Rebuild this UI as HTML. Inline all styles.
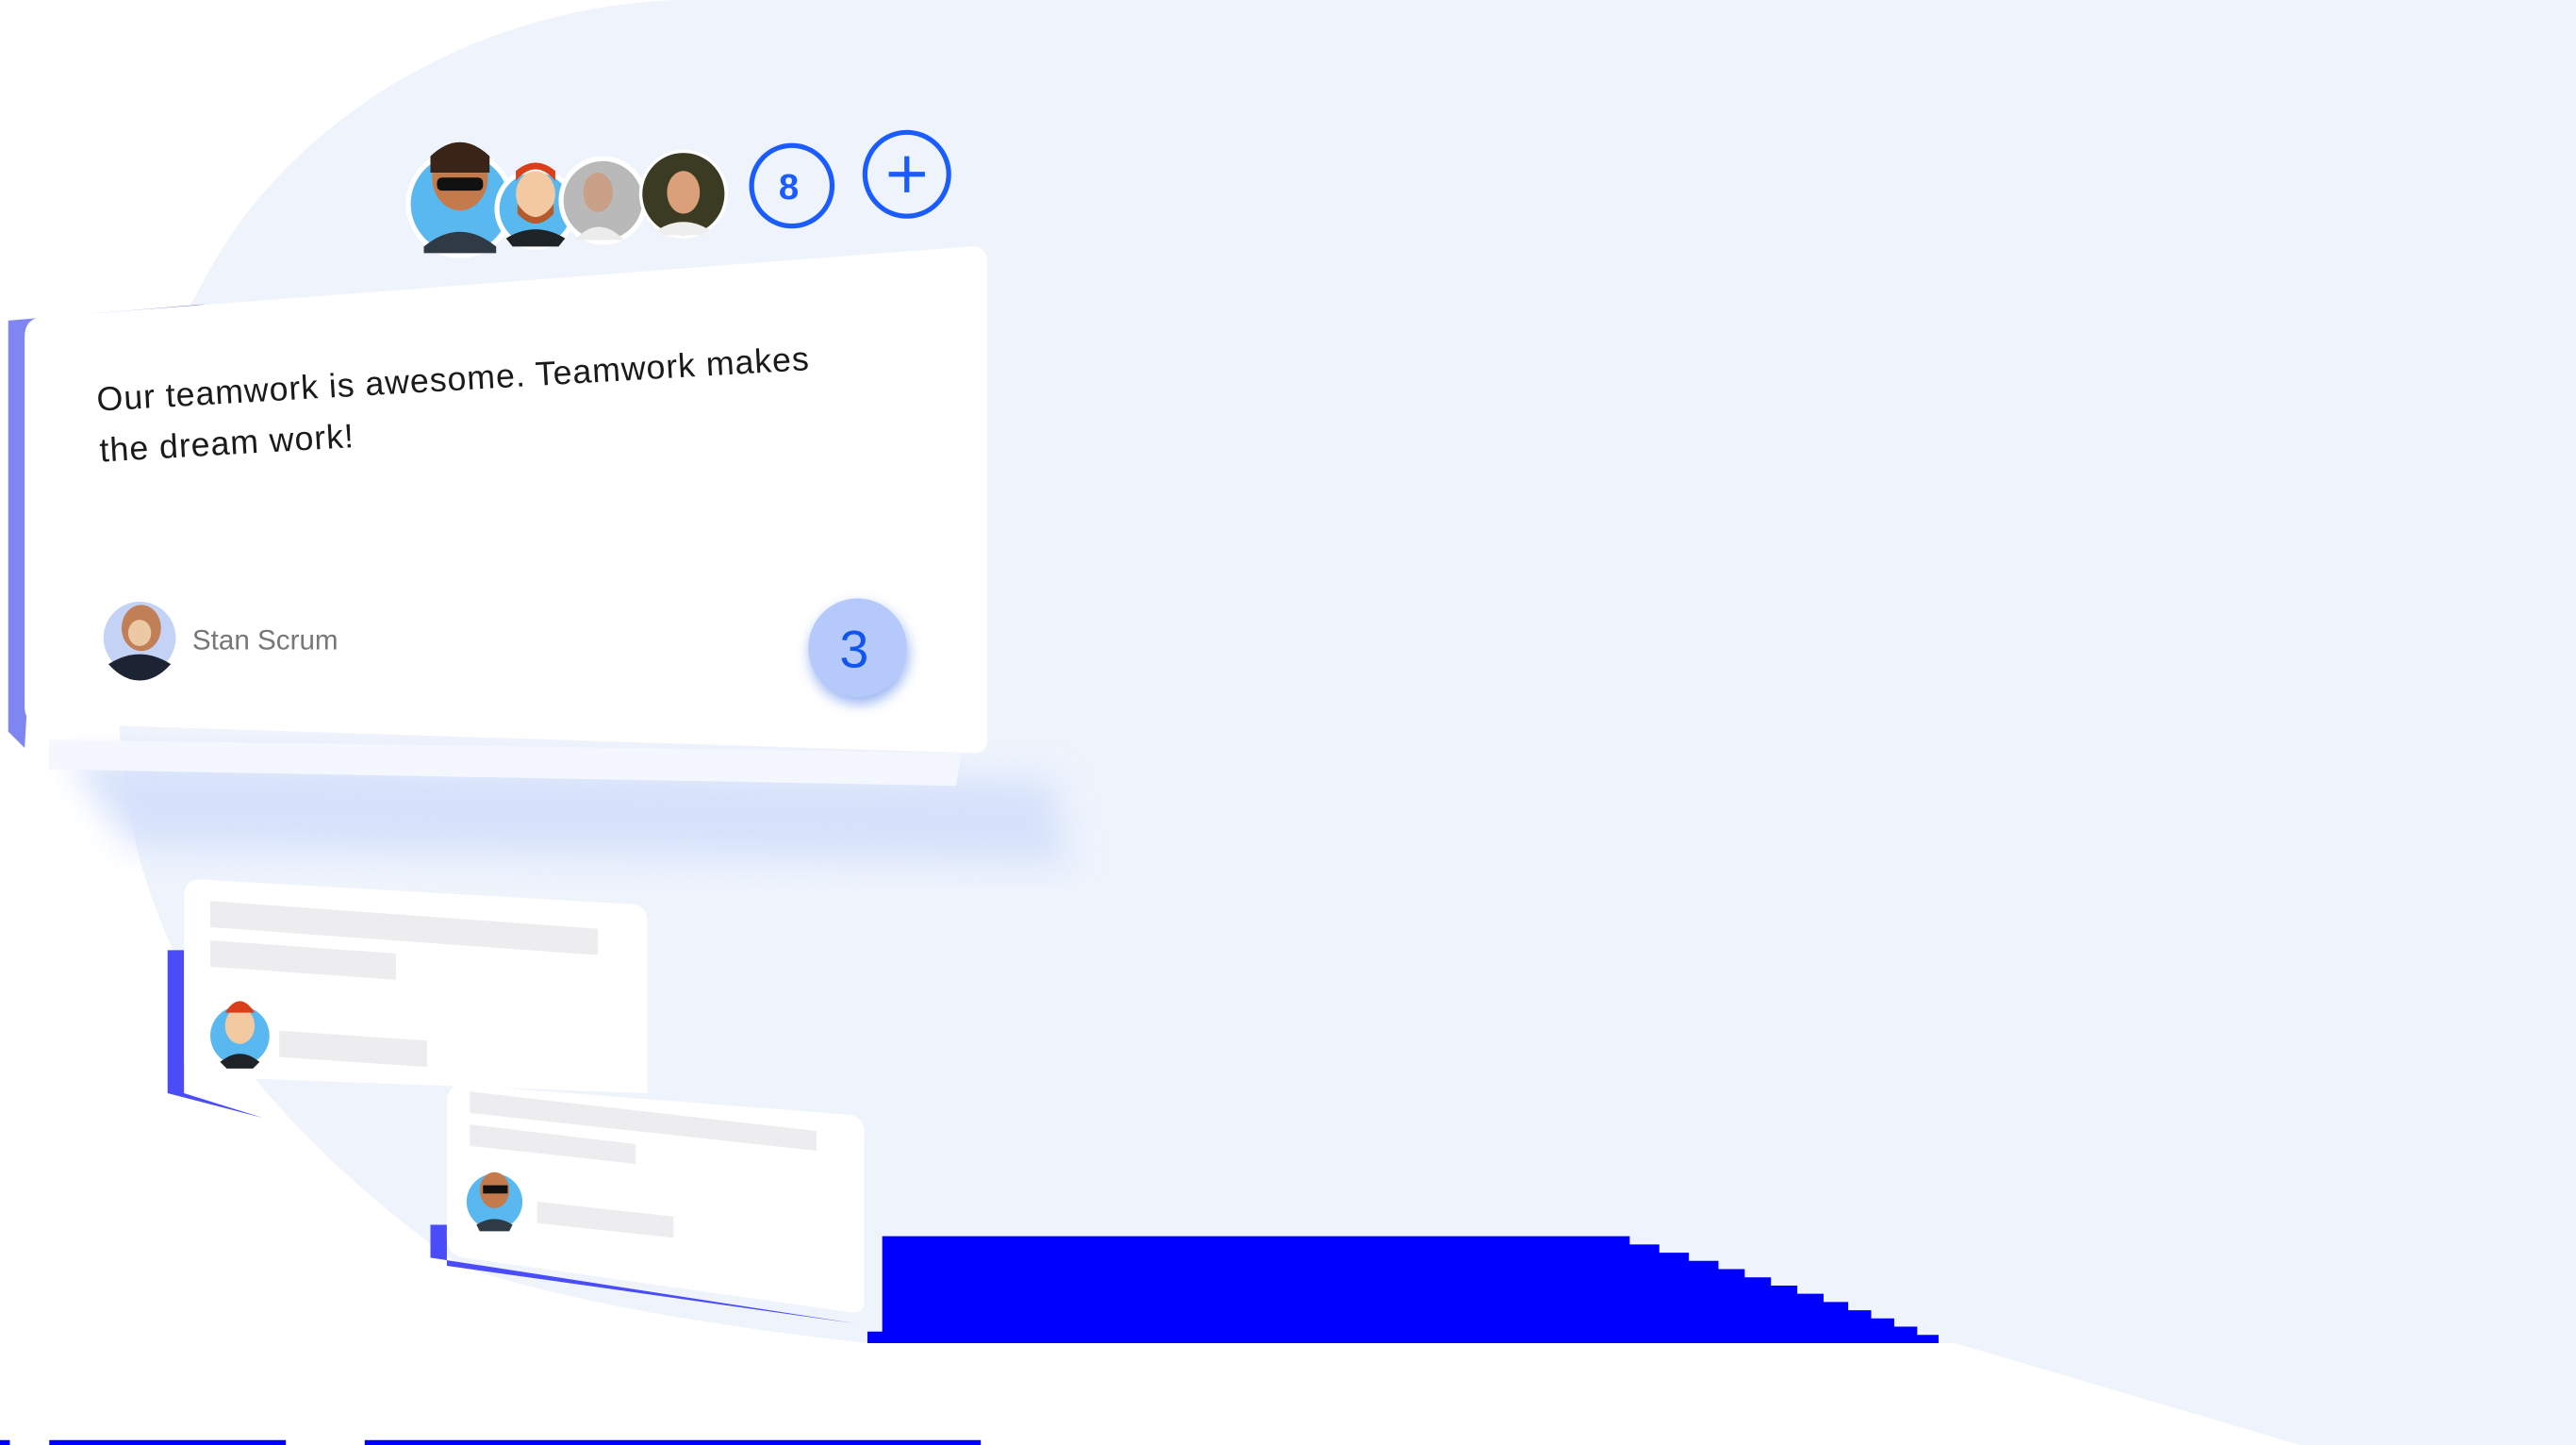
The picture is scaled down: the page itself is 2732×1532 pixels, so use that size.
<!DOCTYPE html>
<html><head><meta charset="utf-8"><style>
html,body{margin:0;padding:0;background:#fff;overflow:hidden;}
#w{position:absolute;left:0;top:0;width:1568px;height:879px;transform-origin:0 0;transform:scale(1.74235,1.7429);font-family:"Liberation Sans",sans-serif;}
.a{position:absolute;}
</style></head><body><div id="w">
<svg class="a" style="left:0;top:0" width="1568" height="879" viewBox="0 0 1568 879">
<defs>
<filter id="bl" x="-20%" y="-20%" width="140%" height="140%"><feGaussianBlur stdDeviation="10"/></filter>
<filter id="sh" x="-20%" y="-20%" width="140%" height="140%"><feGaussianBlur stdDeviation="4"/></filter>
</defs>
<path d="M150,130 C220,40 330,0 420,0 L1568,0 L1568,879 L1400,879 L1190,817 L528,817 C420,805 340,790 280,770 C170,690 90,600 75,470 C60,330 90,210 150,130 Z" fill="#eef3fc"/>
<polygon points="40,460 640,475 650,525 80,515" fill="#d6e2fb" filter="url(#bl)"/>
<polygon points="5,195 125,185 30,200 15,455 5,445" fill="#7f86f2"/>
<polygon points="30,450 585,458 582,478 30,468" fill="#f4f7fe"/>
<path d="M25,193 L590,150 Q601,149 601,160 L601,450 Q601,459 590,458 L25,440 Q15,440 15,430 L15,205 Q15,194 25,193 Z" fill="#fff"/>
<polygon points="102,578 112,578 112,665 160,680 102,665" fill="#4a4cf8"/>
<path d="M122,535 L385,550 Q394,551 394,560 L394,665 L122,655 Q112,655 112,645 L112,545 Q112,535 122,535 Z" fill="#fff"/>
<polygon points="128,548 364,565 364,581 128,564" fill="#ededf0"/>
<polygon points="128,572 241,580 241,596 128,588" fill="#ededf0"/>
<polygon points="170,627 260,633 260,649 170,643" fill="#ededf0"/>
<polygon points="262,745 272,745 272,770 520,805 262,765" fill="#4a4cf8"/>
<path d="M282,660 L516,678 Q526,679 526,689 L526,792 Q526,800 516,798 L282,765 Q272,763 272,753 L272,670 Q272,660 282,660 Z" fill="#fff"/>
<polygon points="286,664 497,688 497,700 286,677" fill="#ededf0"/>
<polygon points="286,684 387,696 387,708 286,697" fill="#ededf0"/>
<polygon points="327,731 410,740 410,753 327,744" fill="#ededf0"/>
<path d="M537,752 H992 V757 H1010 V762 H1028 V767 H1046 V772 H1062 V777 H1078 V782 H1094 V787 H1110 V792 H1125 V797 H1139 V802 H1153 V807 H1167 V812 H1180 V817 H528 V810 H537 Z" fill="#0000ff"/>
<rect x="0" y="876" width="6" height="3" fill="#0000ff"/>
<rect x="30" y="876" width="144" height="3" fill="#0000ff"/>
<rect x="222" y="876" width="375" height="3" fill="#0000ff"/>
<circle cx="280" cy="124" r="33" fill="#fff"/>
<circle cx="280" cy="124" r="30" fill="#5ab8f0"/>
<ellipse cx="280" cy="108" rx="17" ry="20" fill="#c47a4a"/>
<path d="M262,95 Q280,78 298,95 L298,105 L262,105 Z" fill="#3a2418"/>
<rect x="266" y="108" width="28" height="8" rx="3" fill="#111"/>
<path d="M258,150 Q280,132 302,150 L302,154 L258,154 Z" fill="#2f3a45"/>
<circle cx="326" cy="127" r="25" fill="#fff"/>
<circle cx="326" cy="127" r="22" fill="#5ab8f0"/>
<ellipse cx="326" cy="118" rx="12" ry="14" fill="#f2c9a0"/>
<path d="M314,110 Q326,96 338,110 L338,104 Q326,94 314,104 Z" fill="#d9401a"/>
<path d="M315,124 Q326,140 337,124 L337,130 Q326,142 315,130 Z" fill="#b55a2a"/>
<path d="M308,145 Q326,134 344,145 L340,150 L312,150 Z" fill="#1e2328"/>
<circle cx="367" cy="122" r="27" fill="#fff"/>
<circle cx="367" cy="122" r="24" fill="#b9b9b9"/>
<ellipse cx="364" cy="117" rx="9" ry="12" fill="#c8a088"/>
<path d="M350,146 Q364,130 380,146 Z" fill="#ececec"/>
<circle cx="416" cy="118" r="27" fill="#fff"/>
<circle cx="416" cy="118" r="25" fill="#3b3a22"/>
<ellipse cx="416" cy="117" rx="10" ry="13" fill="#d9a07a"/>
<path d="M400,140 Q416,130 432,140 L428,143 L404,143 Z" fill="#eee"/>
<circle cx="482" cy="113" r="24.5" fill="none" stroke="#1a5cff" stroke-width="3"/>
<circle cx="552" cy="106" r="25.5" fill="none" stroke="#1a5cff" stroke-width="3"/>
<path d="M541,106 H563 M552,95 V117" stroke="#1a5cff" stroke-width="3"/>
<circle cx="85" cy="388" r="22" fill="#c4d3f5"/>
<ellipse cx="86" cy="382" rx="12" ry="14" fill="#c07f55"/>
<ellipse cx="85" cy="385" rx="7" ry="8" fill="#ecc9a5"/>
<path d="M66,404 Q85,392 104,404 Q95,414 85,414 Q75,414 66,404 Z" fill="#1c2433"/>
<circle cx="523" cy="398" r="30" fill="#97b3f3" filter="url(#sh)"/>
<circle cx="522" cy="394" r="30" fill="#b5cafb"/>
<circle cx="146" cy="630" r="18" fill="#5ab8f0"/>
<ellipse cx="146" cy="624" rx="9" ry="11" fill="#f2c9a0"/>
<path d="M137,616 Q146,602 155,616 Z" fill="#d9401a"/>
<path d="M134,646 Q146,636 158,646 L154,650 L138,650 Z" fill="#1e2328"/>
<circle cx="301" cy="731" r="17" fill="#5ab8f0"/>
<ellipse cx="301" cy="724" rx="9" ry="11" fill="#c47a4a"/>
<rect x="294" y="721" width="15" height="5" fill="#111"/>
<path d="M290,745 Q301,738 312,745 L310,749 L292,749 Z" fill="#2f3a45"/>
</svg>
<div class="a" style="left:58px;top:228px;width:540px;transform:rotate(-3.3deg);transform-origin:0 0;font-size:20.5px;letter-spacing:0.55px;line-height:31px;color:#1a1a1a;white-space:nowrap;">Our teamwork is awesome. Teamwork makes<br>the dream work!</div>
<div class="a" style="left:117px;top:380px;font-size:17px;color:#777;">Stan Scrum</div>
<div class="a" style="left:511px;top:377px;font-size:32px;color:#1155ee;">3</div>
<div class="a" style="left:474px;top:101px;font-size:22px;font-weight:bold;color:#1a5cff;">8</div>
</div></body></html>
